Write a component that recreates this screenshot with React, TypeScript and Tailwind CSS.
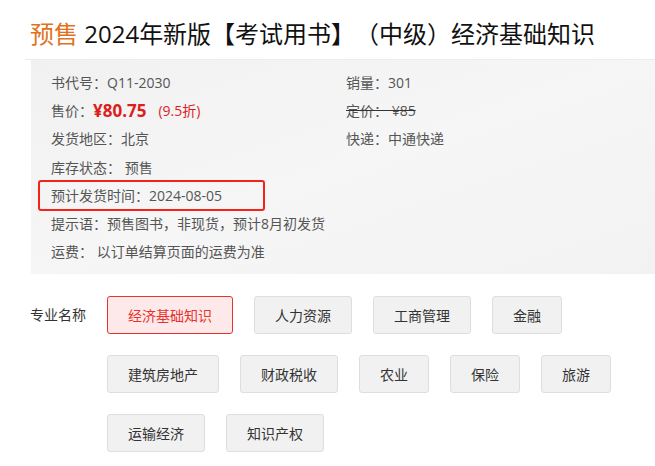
const tagRows = [
  ['经济基础知识', '人力资源', '工商管理', '金融'],
  ['建筑房地产', '财政税收', '农业', '保险', '旅游'],
  ['运输经济', '知识产权'],
];

function Row({ children }: { children: React.ReactNode }) {
  return <div className="h-[28.3px] flex items-center whitespace-nowrap">{children}</div>;
}

export default function App() {
  return (
    <div
      className="w-[655px] h-[466px] bg-white overflow-hidden text-[14px] text-[#555] [text-spacing-trim:space-all]"
      style={{ fontFamily: '"Open Sans", "Noto Sans CJK SC", sans-serif' }}
    >
      {/* title */}
      <div className="ml-[25px] pl-[5px] pt-[16px] h-[60px] border-b border-[#ececec]">
        <h1 className="text-[24px] leading-[36px] text-[#111] whitespace-nowrap">
          <span className="text-[#e0721e]">预售</span> 2024年新版【考试用书】（中级）经济基础知识
        </h1>
      </div>

      {/* info box */}
      <div className="ml-[31px] h-[214px] pt-[8px] pl-[20px] flex bg-gradient-to-br from-[#f1f1f1] via-[#f6f6f6] to-[#f2f2f2]">
        <div className="w-[295px]">
          <Row>书代号：Q11-2030</Row>
          <Row>
            售价：
            <span className="text-[#dd1e1e] font-bold text-[17px]">¥80.75</span>
            <span className="text-[#dd1e1e] ml-[12px]">(9.5折)</span>
          </Row>
          <Row>发货地区：北京</Row>
          <Row>库存状态：&nbsp;预售</Row>
          <div className="relative">
            <Row>预计发货时间：2024-08-05</Row>
            <div className="absolute left-[-13px] top-[-1px] w-[227px] h-[31px] border-2 border-[#f5221b] rounded-[3px]" />
          </div>
          <Row>提示语：预售图书，非现货，预计8月初发货</Row>
          <Row>运费：&nbsp;以订单结算页面的运费为准</Row>
        </div>
        <div>
          <Row>销量：301</Row>
          <Row>
            <span className="line-through decoration-[#333]">定价：&nbsp;¥85</span>
          </Row>
          <Row>快递：中通快递</Row>
        </div>
      </div>

      {/* tags */}
      <div className="flex pl-[30px] pt-[22px]">
        <div className="w-[77px] h-[38px] leading-[38px] text-[#333]">专业名称</div>
        <div className="flex flex-col gap-y-[21px]">
          {tagRows.map((row, i) => (
            <div key={i} className="flex gap-x-[21px]">
              {row.map((t) =>
                t === '经济基础知识' ? (
                  <div
                    key={t}
                    className="h-[38px] px-[20px] flex items-center border border-[#e8322e] bg-[#fde9e9] text-[#e8322e] rounded-[3px]"
                  >
                    {t}
                  </div>
                ) : (
                  <div
                    key={t}
                    className="h-[38px] px-[20px] flex items-center border border-[#dedede] bg-[#f1f1f1] text-[#333] rounded-[3px]"
                  >
                    {t}
                  </div>
                )
              )}
            </div>
          ))}
        </div>
      </div>
    </div>
  );
}
